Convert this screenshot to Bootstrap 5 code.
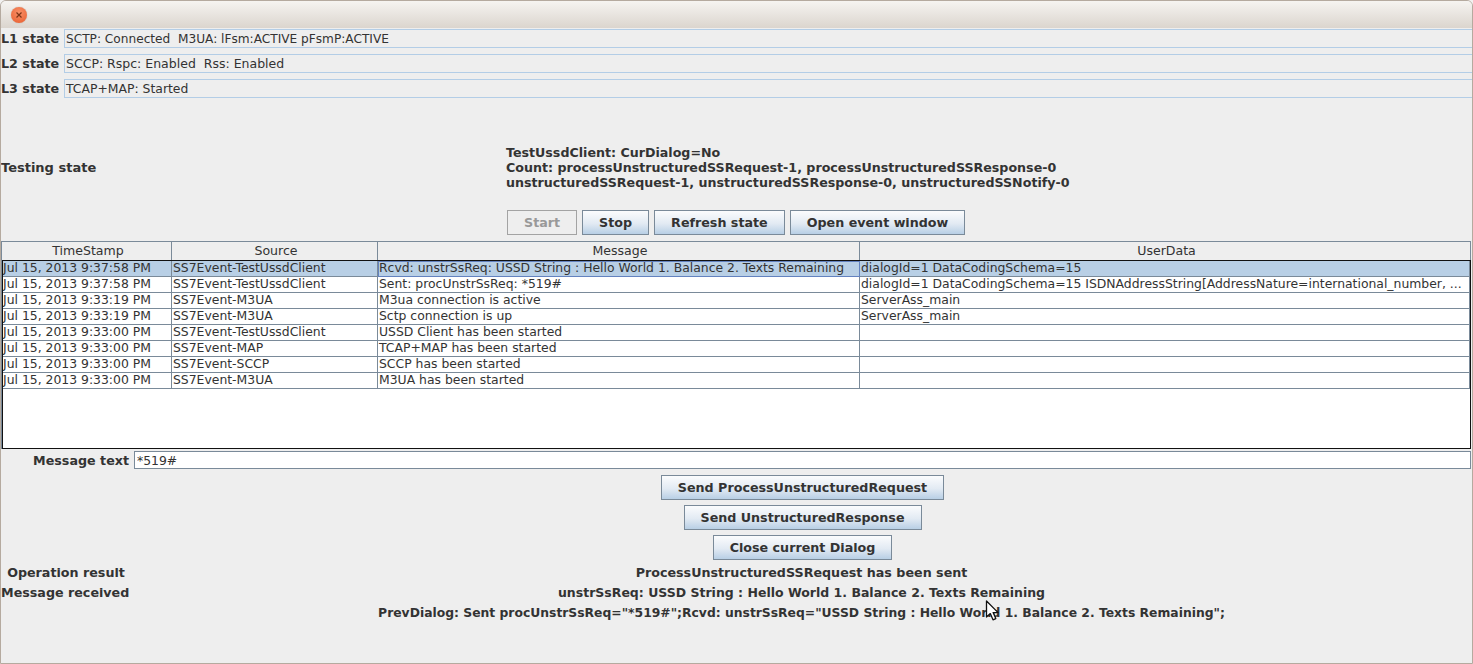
<!DOCTYPE html>
<html lang="en">
<head>
  <meta charset="UTF-8">
  <title>Simulator</title>
  <link href="https://cdn.jsdelivr.net/npm/bootstrap@5.3.3/dist/css/bootstrap.min.css" rel="stylesheet">
  <style>
    html, body { height: 664px; overflow: hidden; background: #f2f1f0; }
    body { font: 12.4px/15px "DejaVu Sans", sans-serif; color: #333; }
    .app-window { position: relative; height: 664px; background: #eeeeee; border: 1px solid #b5aa9f; border-radius: 6px 6px 0 0; overflow: hidden; }
    .title-bar { height: 27px; padding-left: 10px; background: linear-gradient(#f6f4f1, #dbd5ce); }
    .close-dot { width: 16px; height: 16px; margin-top: 6px; border-radius: 50%; background: radial-gradient(circle at 50% 35%, #f89068, #e85c2c); box-shadow: 0 0 1px #a0928a; }
    .state-list { padding-top: 1px; }
    .state-row { height: 19px; margin-bottom: 6px; }
    .state-label { width: 63px; flex: none; font-weight: 700; font-size: 12.7px; }
    .state-field { flex: 1; height: 19px; padding-left: 1px; line-height: 18px; border: 1px solid #b3cde6; border-right: 0; }
    .state-tight { font-size: 12.15px; }
    .state-wide { font-size: 12.5px; }
    .testing-block { margin-top: 47px; height: 45px; font-size: 12.65px; }
    .testing-label { width: 505px; flex: none; font-weight: 700; font-size: 13px; }
    .testing-text { font-weight: 700; }
    .top-btns { margin-top: 20px; margin-left: 506px; gap: 5px; }
    .java-btn { height: 25px; padding: 0 16px; font: 700 12.7px/23px "DejaVu Sans", sans-serif; color: #333; background: linear-gradient(#fbfcfd, #e2eaf3 55%, #b8cfe5); border: 1px solid #7a8a99; border-radius: 0; }
    .java-btn:disabled { color: #999; background: #eeeeee; border-color: #a3a3a3; opacity: 1; }
    .log-wrap { margin: 6px 1px 0 0; }
    .log-table { width: 1470px; table-layout: fixed; margin: 0; border-collapse: separate; border-spacing: 0; color: #333; }
    .log-table th, .log-table td { padding: 0 0 0 1px; height: 16px; font-size: 12.4px; line-height: 13px; vertical-align: top; white-space: nowrap; overflow: hidden; background: #fff; color: #333; border: 0; border-right: 1px solid #7a8a99; border-bottom: 1px solid #7a8a99; box-shadow: none; }
    .log-table td:first-child { padding-left: 0; }
    .log-table th { height: 19px; padding-left: 3px; font-size: 12.55px; line-height: 17px; font-weight: 400; text-align: center; background: #eeeeee; border-top: 1px solid #7a8a99; border-bottom: 0; }
    .log-table th:first-child { border-left: 1px solid #7a8a99; }
    .log-body-box { height: 189px; width: 1469px; margin-left: 1px; border: 1px solid #111; background: #fff; overflow: hidden; box-shadow: -1px 0 0 #7a8a99; }
    .log-body-box .log-table { width: 1467px; }
    .log-table tr.row-on td { background: #b8cfe5; }
    .log-table tr.row-on td.cell-focus { outline: 1px solid #6382bf; outline-offset: -1px; }
    .msg-row { margin-top: 2px; height: 18px; }
    .msg-label { width: 128px; flex: none; text-align: right; font-weight: 700; font-size: 12.7px; margin-right: 5px; }
    .msg-input { width: 1337px; height: 18px; padding: 0 0 0 2px; font: 12.4px/16px "DejaVu Sans", sans-serif; color: #333; border: 1px solid #7a8a99; border-radius: 0; background: #fff; }
    .send-btns { margin-top: 6px; gap: 5px; width: 1603px; }
    .result-block { margin-top: 3px; font-size: 12.7px; }
    .result-row { height: 20px; line-height: 20px; font-weight: 700; white-space: nowrap; }
    .result-label { width: 130px; flex: none; }
    .received-line { font-size: 12.5px; }
    .prev-line { font-size: 12.35px; }
    .pointer-arrow { position: absolute; left: 984px; top: 599px; width: 16px; height: 22px; }
  </style>
</head>
<body>
  <div class="app-window">
    <div class="title-bar d-flex"><div class="close-dot d-flex align-items-center justify-content-center">
      <svg width="8" height="8" viewBox="0 0 8 8"><path d="M1.5 1.5l5 5M6.5 1.5l-5 5" stroke="#7c3416" stroke-width="1.2"/></svg>
    </div></div>

    <div class="state-list">
      <div class="state-row d-flex align-items-center"><div class="state-label">L1 state</div><div class="state-field state-tight">SCTP: Connected&nbsp; M3UA: lFsm:ACTIVE pFsmP:ACTIVE</div></div>
      <div class="state-row d-flex align-items-center"><div class="state-label">L2 state</div><div class="state-field state-wide">SCCP: Rspc: Enabled&nbsp; Rss: Enabled</div></div>
      <div class="state-row d-flex align-items-center"><div class="state-label">L3 state</div><div class="state-field">TCAP+MAP: Started</div></div>
    </div>

    <div class="testing-block d-flex align-items-center">
      <div class="testing-label">Testing state</div>
      <div class="testing-text">TestUssdClient: CurDialog=No<br>Count: processUnstructuredSSRequest-1, processUnstructuredSSResponse-0<br>unstructuredSSRequest-1, unstructuredSSResponse-0, unstructuredSSNotify-0</div>
    </div>

    <div class="top-btns d-flex">
      <button class="java-btn" disabled>Start</button>
      <button class="java-btn">Stop</button>
      <button class="java-btn">Refresh state</button>
      <button class="java-btn">Open event window</button>
    </div>

    <div class="log-wrap">
      <table class="table log-table">
        <colgroup><col style="width:171px"><col style="width:206px"><col style="width:482px"><col></colgroup>
        <thead><tr><th>TimeStamp</th><th>Source</th><th>Message</th><th>UserData</th></tr></thead>
      </table>
      <div class="log-body-box">
        <table class="table log-table">
          <colgroup><col style="width:169px"><col style="width:206px"><col style="width:482px"><col></colgroup>
          <tbody>
            <tr class="row-on"><td>Jul 15, 2013 9:37:58 PM</td><td>SS7Event-TestUssdClient</td><td class="cell-focus">Rcvd: unstrSsReq: USSD String : Hello World 1. Balance 2. Texts Remaining</td><td>dialogId=1 DataCodingSchema=15</td></tr>
            <tr><td>Jul 15, 2013 9:37:58 PM</td><td>SS7Event-TestUssdClient</td><td>Sent: procUnstrSsReq: *519#</td><td>dialogId=1 DataCodingSchema=15 ISDNAddressString[AddressNature=international_number, ...</td></tr>
            <tr><td>Jul 15, 2013 9:33:19 PM</td><td>SS7Event-M3UA</td><td>M3ua connection is active</td><td>ServerAss_main</td></tr>
            <tr><td>Jul 15, 2013 9:33:19 PM</td><td>SS7Event-M3UA</td><td>Sctp connection is up</td><td>ServerAss_main</td></tr>
            <tr><td>Jul 15, 2013 9:33:00 PM</td><td>SS7Event-TestUssdClient</td><td>USSD Client has been started</td><td></td></tr>
            <tr><td>Jul 15, 2013 9:33:00 PM</td><td>SS7Event-MAP</td><td>TCAP+MAP has been started</td><td></td></tr>
            <tr><td>Jul 15, 2013 9:33:00 PM</td><td>SS7Event-SCCP</td><td>SCCP has been started</td><td></td></tr>
            <tr><td>Jul 15, 2013 9:33:00 PM</td><td>SS7Event-M3UA</td><td>M3UA has been started</td><td></td></tr>
          </tbody>
        </table>
      </div>
    </div>

    <div class="msg-row d-flex align-items-center">
      <div class="msg-label">Message text</div>
      <input class="msg-input" type="text" value="*519#">
    </div>

    <div class="send-btns d-flex flex-column align-items-center">
      <button class="java-btn">Send ProcessUnstructuredRequest</button>
      <button class="java-btn">Send UnstructuredResponse</button>
      <button class="java-btn">Close current Dialog</button>
    </div>

    <div class="result-block">
      <div class="result-row d-flex">
        <div class="result-label text-center">Operation result</div>
        <div class="flex-fill text-center">ProcessUnstructuredSSRequest has been sent</div>
      </div>
      <div class="result-row d-flex">
        <div class="result-label">Message received</div>
        <div class="flex-fill text-center received-line">unstrSsReq: USSD String : Hello World 1. Balance 2. Texts Remaining</div>
      </div>
      <div class="result-row d-flex">
        <div class="result-label"></div>
        <div class="flex-fill text-center prev-line">PrevDialog: Sent procUnstrSsReq="*519#";Rcvd: unstrSsReq="USSD String : Hello World 1. Balance 2. Texts Remaining";</div>
      </div>
    </div>

    <svg class="pointer-arrow" viewBox="0 0 16 22"><path d="M1.5 1v16l3.8-3.4 2.7 6.2 2.8-1.2-2.7-6h5z" fill="#fff" stroke="#111" stroke-width="1.3" stroke-linejoin="round"/></svg>
  </div>
  <script src="https://cdn.jsdelivr.net/npm/bootstrap@5.3.3/dist/js/bootstrap.bundle.min.js"></script>
</body>
</html>
